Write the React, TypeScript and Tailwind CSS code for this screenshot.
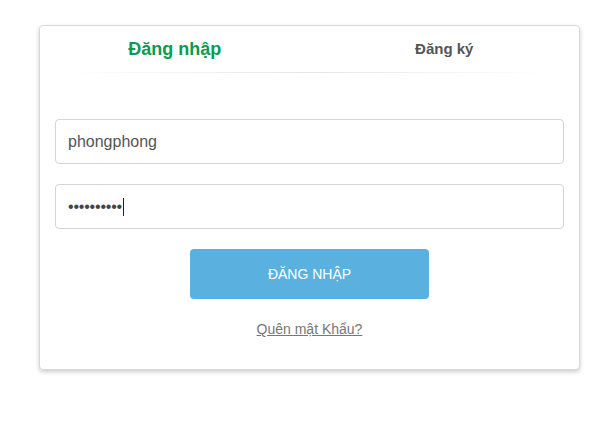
import React from "react";

export default function App() {
  return (
    <div
      className="w-[615px] h-[421px] bg-white pt-[25px] pl-[39px]"
      style={{ fontFamily: '"Liberation Sans", Arial, sans-serif' }}
    >
      <div className="w-[541px] h-[345px] border border-[#d9d9d9] rounded-[4px] bg-white shadow-[0_2px_4px_rgba(0,0,0,0.2)]">
        <div className="flex h-[46px]">
          <div className="flex-1 flex items-center justify-center pt-[1px] text-[18px] font-bold text-[#0b9a51]">
            Đăng nhập
          </div>
          <div className="flex-1 flex items-center justify-center pt-[0px] text-[15px] font-bold text-[#555]">
            Đăng ký
          </div>
        </div>
        <div className="mx-[30px] h-px bg-gradient-to-r from-transparent via-[#e6e6e6] to-transparent" />
        <div className="px-[15px] pt-[46px]">
          <div className="h-[45px] border border-[#d4d4d4] rounded-[4px] flex items-center pl-[12px] text-[16px] text-[#555]">
            phongphong
          </div>
          <div className="mt-[20px] h-[45px] border border-[#d4d4d4] rounded-[4px] flex items-center pl-[12px] text-[16px] text-[#444]">
            <span className="tracking-[-0.2px]">••••••••••</span>
            <span className="inline-block w-px h-[18px] bg-[#222] ml-[1px]" />
          </div>
          <div className="mt-[20px] flex justify-center">
            <div className="w-[239px] h-[50px] rounded-[4px] bg-[#5ab1e0] flex items-center justify-center text-white text-[14px]">
              ĐĂNG NHẬP
            </div>
          </div>
          <div className="mt-[20px] text-center text-[14px] text-[#777] underline">
            Quên mật Khẩu?
          </div>
        </div>
      </div>
    </div>
  );
}
